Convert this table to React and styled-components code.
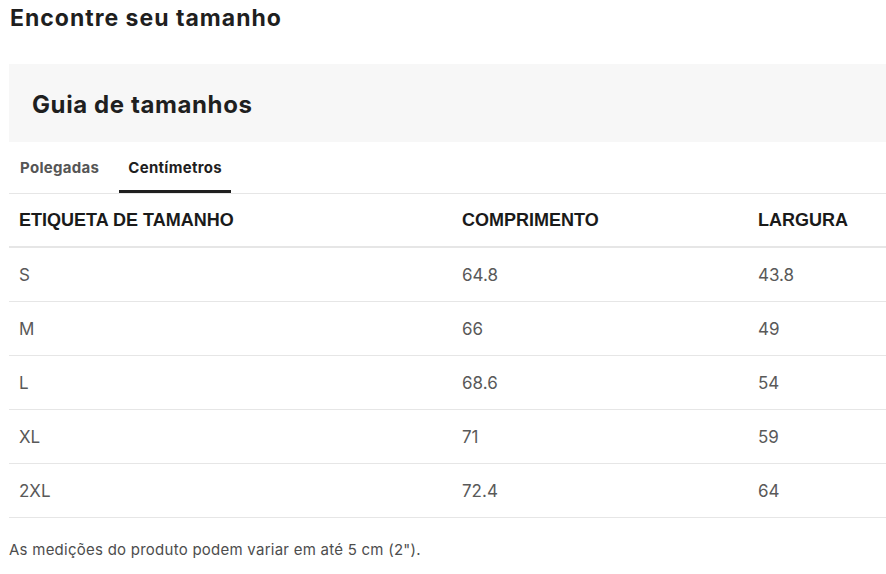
import React, {useState} from 'react';
import styled, {createGlobalStyle} from 'styled-components';

const GlobalStyle = createGlobalStyle`
	html, body {
		margin: 0;
		padding: 0;
		background: #fff;
		overflow: hidden;
	}
	body {
		font-family: Inter, "Noto Sans", sans-serif;
		color: #1a1a1a;
	}
`;

const Page = styled.div`
	width: 886px;
	height: 574px;
	padding: 0 0 0 9px;
	box-sizing: border-box;
`;

const Title = styled.h2`
	margin: 0;
	padding: 4px 0 0 1px;
	height: 60px;
	font-size: 23px;
	font-weight: 700;
	line-height: 28px;
	letter-spacing: 1px;
	color: #1f1f1f;
`;

const GuideBox = styled.div`
	background: #f7f7f7;
	height: 78px;
	display: flex;
	align-items: center;
	padding-left: 23px;
`;

const GuideTitle = styled.h3`
	margin: 0;
	font-size: 24px;
	font-weight: 700;
	letter-spacing: 0.6px;
	color: #1f1f1f;
	padding-top: 2px;
`;

const Tabs = styled.div`
	display: flex;
	gap: 11px;
	height: 52px;
	padding-left: 2px;
	border-bottom: 1px solid #e6e6e6;
	box-sizing: border-box;
`;

const Tab = styled.button`
	border: none;
	background: none;
	padding: 3px 9px 0;
	font-family: Inter, sans-serif;
	font-size: 15px;
	font-weight: 700;
	letter-spacing: 0.3px;
	color: ${p => (p.$active ? '#1f1f1f' : '#555')};
	border-bottom: 3px solid ${p => (p.$active ? '#1f1f1f' : 'transparent')};
	height: 51px;
	cursor: pointer;
`;

const Table = styled.table`
	width: 877px;
	border-collapse: collapse;
`;

const Th = styled.th`
	text-align: left;
	font-family: "Liberation Sans", Arial, sans-serif;
	font-size: 18px;
	font-weight: 700;
	color: #1a1a1a;
	height: 52px;
	padding: 0 0 0 10px;
	border-bottom: 2px solid #e6e6e6;
	width: ${p => p.$w || 'auto'};
`;

const Td = styled.td`
	font-family: Inter, sans-serif;
	font-size: 17px;
	color: #595959;
	height: 53px;
	padding: 0 0 0 10px;
	border-bottom: 1px solid #e6e6e6;
`;

const Note = styled.p`
	margin: 22px 0 0;
	font-size: 15px;
	letter-spacing: 0.25px;
	color: #4d4d4d;
`;

const rows = [
	['S', '64.8', '43.8'],
	['M', '66', '49'],
	['L', '68.6', '54'],
	['XL', '71', '59'],
	['2XL', '72.4', '64'],
];

export default function App() {
	const [unit, setUnit] = useState('cm');
	return (
		<Page>
			<GlobalStyle/>
			<Title>Encontre seu tamanho</Title>
			<GuideBox>
				<GuideTitle>Guia de tamanhos</GuideTitle>
			</GuideBox>
			<Tabs>
				<Tab $active={unit === 'in'} onClick={() => setUnit('in')}>Polegadas</Tab>
				<Tab $active={unit === 'cm'} onClick={() => setUnit('cm')}>Centímetros</Tab>
			</Tabs>
			<Table>
				<thead>
					<tr>
						<Th $w="433px">ETIQUETA DE TAMANHO</Th>
						<Th $w="286px">COMPRIMENTO</Th>
						<Th>LARGURA</Th>
					</tr>
				</thead>
				<tbody>
					{rows.map(r => (
						<tr key={r[0]}>
							<Td>{r[0]}</Td>
							<Td>{r[1]}</Td>
							<Td>{r[2]}</Td>
						</tr>
					))}
				</tbody>
			</Table>
			<Note>As medições do produto podem variar em até 5 cm (2").</Note>
		</Page>
	);
}
